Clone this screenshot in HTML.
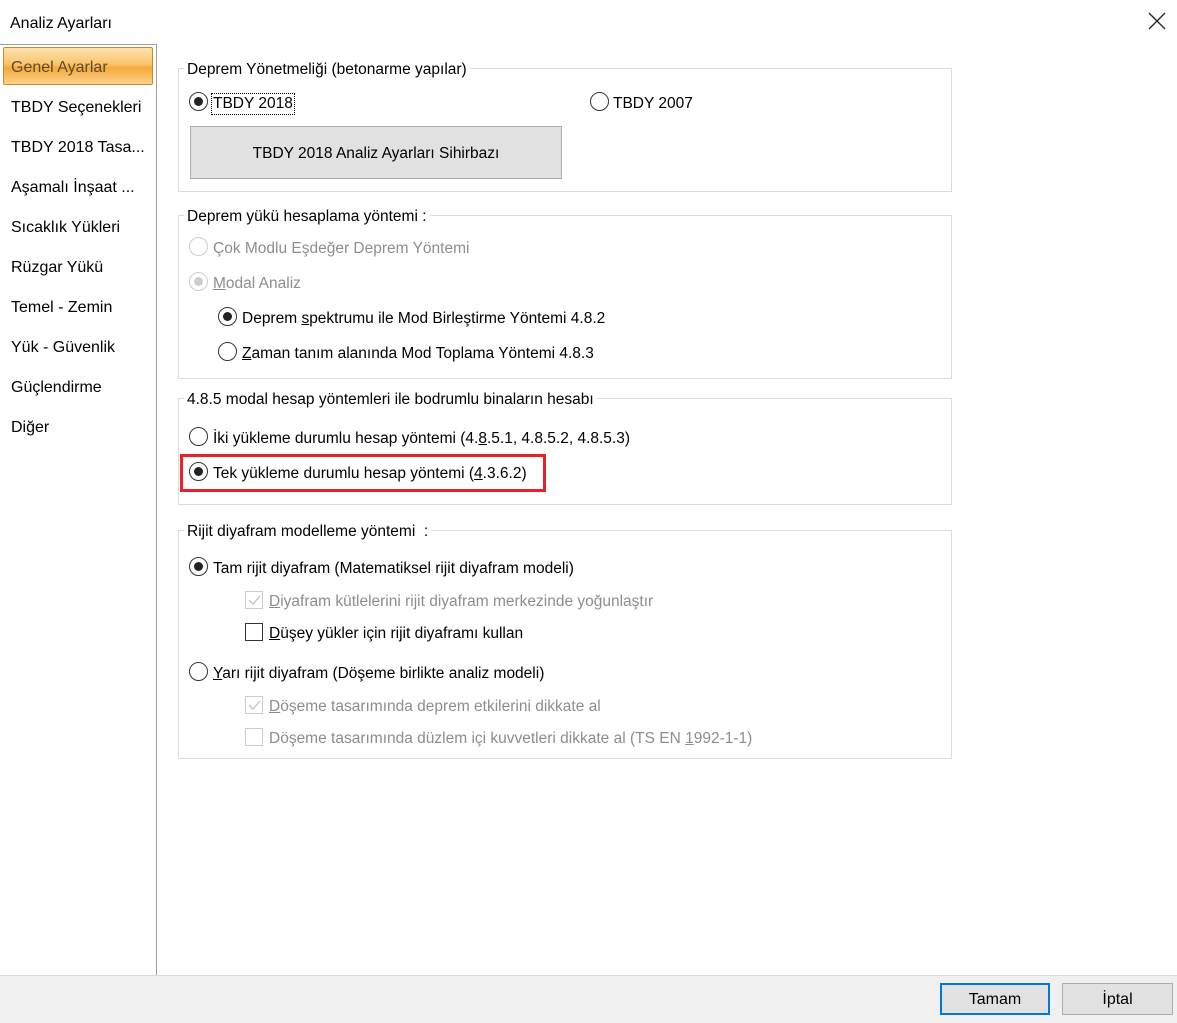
<!DOCTYPE html>
<html><head><meta charset="utf-8"><style>
body{margin:0;width:1177px;height:1022px;background:#fff;position:relative;overflow:hidden;font-family:"Liberation Sans",sans-serif;font-size:15.5px;color:#000}
.a{position:absolute;white-space:nowrap}
.t{line-height:20px;margin-top:2px}
.gb{position:absolute;border:1px solid #dcdcdc}
.gt{position:absolute;background:#fff;padding:0 3px;line-height:20px;white-space:nowrap;margin-top:1px}
.r{position:absolute;width:19px;height:19px;margin:-1px 0 0 -1px;border:1px solid #333;border-radius:50%;box-sizing:border-box;background:#fff}
.r.on::after{content:"";position:absolute;left:4px;top:4px;width:9px;height:9px;border-radius:50%;background:#222}
.r.dis{border-color:#ccc}
.r.dis.on::after{background:#ccc}
.c{position:absolute;width:18px;height:18px;border:1px solid #333;box-sizing:border-box;background:#fff}
.c.dis{border-color:#ccc}
.g{color:#8d8d8d}
.side{position:absolute;left:11px;line-height:20px;font-size:16px;margin-top:2px}
</style></head><body>
<div class="a t" style="left:10px;top:12px;font-size:16px">Analiz Ayarları</div>
<svg class="a" style="left:1148px;top:12px" width="18" height="18"><path d="M1 1L17 17M17 1L1 17" stroke="#222" stroke-width="1.3"/></svg>

<div class="a" style="left:0;top:44px;width:156px;height:930px;border:1px solid #a0a0a0;border-left:none"></div>
<div class="a" style="left:3px;top:47px;width:148px;height:36px;border:1px solid #c98a2e;border-radius:2px;background:linear-gradient(#fde2b0 0%,#fbc46b 45%,#f5a93a 55%,#fcd38a 100%)"></div>
<div class="side" style="top:56px;color:#5a4a30">Genel Ayarlar</div>
<div class="side" style="top:96px">TBDY Seçenekleri</div>
<div class="side" style="top:136px">TBDY 2018 Tasa...</div>
<div class="side" style="top:176px">Aşamalı İnşaat ...</div>
<div class="side" style="top:216px">Sıcaklık Yükleri</div>
<div class="side" style="top:256px">Rüzgar Yükü</div>
<div class="side" style="top:296px">Temel - Zemin</div>
<div class="side" style="top:336px">Yük - Güvenlik</div>
<div class="side" style="top:376px">Güçlendirme</div>
<div class="side" style="top:416px">Diğer</div>

<!-- group 1 -->
<div class="gb" style="left:178px;top:68px;width:772px;height:122px"></div>
<div class="gt" style="left:184px;top:59px">Deprem Yönetmeliği (betonarme yapılar)</div>
<div class="r on" style="left:190px;top:93px"></div>
<div class="a t" style="left:211px;top:91px;border:1px dotted #000;padding:0 1px">TBDY 2018</div>
<div class="r" style="left:591px;top:93px"></div>
<div class="a t" style="left:613px;top:92px">TBDY 2007</div>
<div class="a" style="left:190px;top:126px;width:370px;height:51px;background:#e1e1e1;border:1px solid #adadad;text-align:center;line-height:53px">TBDY 2018 Analiz Ayarları Sihirbazı</div>

<!-- group 2 -->
<div class="gb" style="left:178px;top:215px;width:772px;height:162px"></div>
<div class="gt" style="left:184px;top:206px">Deprem yükü hesaplama yöntemi :</div>
<div class="r dis" style="left:190px;top:238px"></div>
<div class="a t g" style="left:213px;top:237px">Çok Modlu Eşdeğer Deprem Yöntemi</div>
<div class="r dis on" style="left:190px;top:273px"></div>
<div class="a t g" style="left:213px;top:272px"><u>M</u>odal Analiz</div>
<div class="r on" style="left:219px;top:308px"></div>
<div class="a t" style="left:242px;top:307px">Deprem <u>s</u>pektrumu ile Mod Birleştirme Yöntemi 4.8.2</div>
<div class="r" style="left:219px;top:343px"></div>
<div class="a t" style="left:242px;top:342px"><u>Z</u>aman tanım alanında Mod Toplama Yöntemi 4.8.3</div>

<!-- group 3 -->
<div class="gb" style="left:178px;top:398px;width:772px;height:105px"></div>
<div class="gt" style="left:184px;top:389px">4.8.5 modal hesap yöntemleri ile bodrumlu binaların hesabı</div>
<div class="r" style="left:190px;top:428px"></div>
<div class="a t" style="left:213px;top:427px">İki yükleme durumlu hesap yöntemi (4.<u>8</u>.5.1, 4.8.5.2, 4.8.5.3)</div>
<div class="a" style="left:180px;top:454px;width:360px;height:32px;border:3px solid #e8202a"></div>
<div class="r on" style="left:190px;top:463px"></div>
<div class="a t" style="left:213px;top:462px">Tek yükleme durumlu hesap yöntemi (<u>4</u>.3.6.2)</div>

<!-- group 4 -->
<div class="gb" style="left:178px;top:530px;width:772px;height:227px"></div>
<div class="gt" style="left:184px;top:521px">Rijit diyafram modelleme yöntemi &nbsp;:</div>
<div class="r on" style="left:190px;top:558px"></div>
<div class="a t" style="left:213px;top:557px">Tam rijit diyafram (Matematiksel rijit diyafram modeli)</div>
<div class="c dis" style="left:245px;top:591px"></div>
<svg class="a" style="left:245px;top:591px" width="18" height="18"><path d="M4 9L8 13L15 5" stroke="#c8c8c8" stroke-width="1.5" fill="none"/></svg>
<div class="a t g" style="left:269px;top:590px"><u>D</u>iyafram kütlelerini rijit diyafram merkezinde yoğunlaştır</div>
<div class="c" style="left:245px;top:623px"></div>
<div class="a t" style="left:269px;top:622px"><u>D</u>üşey yükler için rijit diyaframı kullan</div>
<div class="r" style="left:190px;top:663px"></div>
<div class="a t" style="left:213px;top:662px"><u>Y</u>arı rijit diyafram (Döşeme birlikte analiz modeli)</div>
<div class="c dis" style="left:245px;top:696px"></div>
<svg class="a" style="left:245px;top:696px" width="18" height="18"><path d="M4 9L8 13L15 5" stroke="#c8c8c8" stroke-width="1.5" fill="none"/></svg>
<div class="a t g" style="left:269px;top:695px"><u>D</u>öşeme tasarımında deprem etkilerini dikkate al</div>
<div class="c dis" style="left:245px;top:728px"></div>
<div class="a t g" style="left:269px;top:727px">Döşeme tasarımında düzlem içi kuvvetleri dikkate al (TS EN <u>1</u>992-1-1)</div>

<!-- bottom -->
<div class="a" style="left:0;top:975px;width:1177px;height:47px;background:#f0f0f0;border-top:1px solid #dadada"></div>
<div class="a" style="left:940px;top:983px;width:110px;height:32px;box-sizing:border-box;border:2px solid #0078d7;background:#e1e1e1;text-align:center;line-height:30px;font-size:16px">Tamam</div>
<div class="a" style="left:1062px;top:983px;width:111px;height:32px;box-sizing:border-box;border:1px solid #adadad;background:#e1e1e1;text-align:center;line-height:32px;font-size:16px">İptal</div>
</body></html>
